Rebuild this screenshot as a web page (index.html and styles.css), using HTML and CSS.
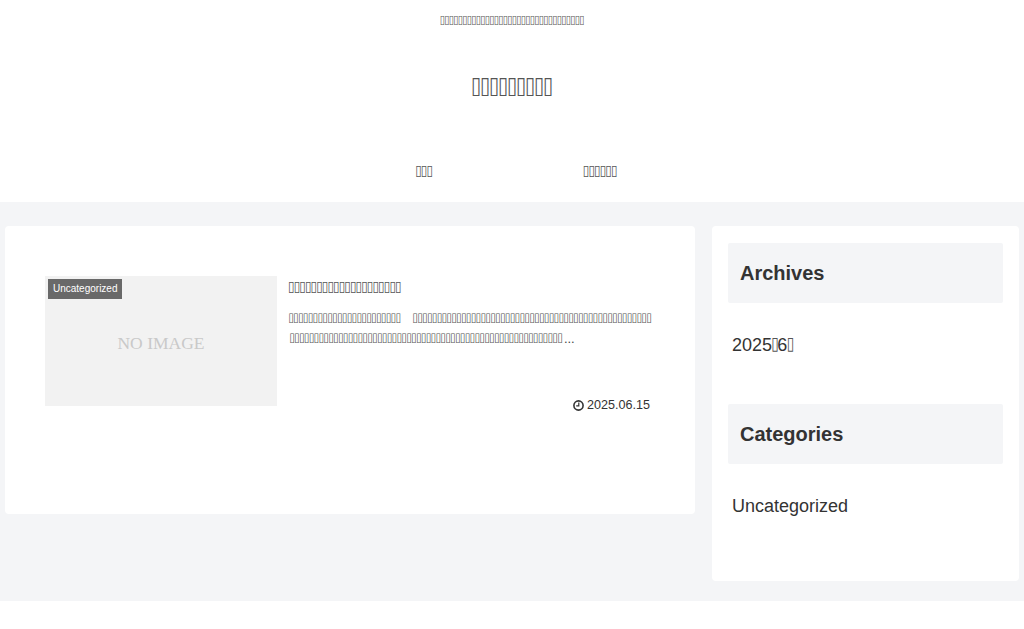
FILE: index.html
```html
<!DOCTYPE html>
<html lang="ja">
<head>
<meta charset="utf-8">
<title>Blog</title>
<link rel="stylesheet" href="styles.css">
</head>
<body>
<header class="site-header">
  <p class="tagline"><span class="t">⌷⌷⌷⌷⌷⌷⌷⌷⌷⌷⌷⌷⌷⌷⌷⌷⌷⌷⌷⌷⌷⌷⌷⌷⌷⌷⌷⌷⌷⌷⌷⌷</span></p>
  <h1 class="site-title"><span class="t">⌷⌷⌷⌷⌷⌷⌷⌷⌷</span></h1>
  <nav class="nav">
    <a class="nav-item"><span class="t">⌷⌷⌷</span></a>
    <a class="nav-item"><span class="t">⌷⌷⌷⌷⌷⌷</span></a>
  </nav>
</header>
<main class="content">
  <section class="card">
    <article class="post">
      <div class="thumb">
        <span class="label">Uncategorized</span>
        <span class="noimage">NO IMAGE</span>
      </div>
      <div class="post-body">
        <h2 class="post-title"><span class="t">⌷⌷⌷⌷⌷⌷⌷⌷⌷⌷⌷⌷⌷⌷⌷⌷⌷⌷⌷⌷</span></h2>
        <p class="excerpt"><span class="t">⌷⌷⌷⌷⌷⌷⌷⌷⌷⌷⌷⌷⌷⌷⌷⌷⌷⌷⌷⌷⌷⌷⌷</span>&#x3000;<span class="t">⌷⌷⌷⌷⌷⌷⌷⌷⌷⌷⌷⌷⌷⌷⌷⌷⌷⌷⌷⌷⌷⌷⌷⌷⌷⌷⌷⌷⌷⌷⌷⌷⌷⌷⌷⌷⌷⌷⌷⌷⌷⌷⌷⌷⌷⌷⌷⌷⌷⌷⌷⌷⌷⌷⌷⌷⌷⌷⌷⌷⌷⌷⌷⌷⌷⌷⌷⌷⌷⌷⌷⌷⌷⌷⌷⌷⌷⌷⌷⌷⌷⌷⌷⌷⌷⌷⌷⌷⌷⌷⌷⌷⌷⌷⌷⌷⌷⌷⌷⌷⌷⌷⌷⌷⌷</span><span class="more">...</span></p>
        <p class="date">
          <svg class="clock" viewBox="0 0 11 11" aria-hidden="true"><circle cx="5.5" cy="5.5" r="4.6" fill="none" stroke="currentColor" stroke-width="1.6"/><path d="M5.8 2.6v3.2H3.2" fill="none" stroke="currentColor" stroke-width="1.2"/></svg>
          2025.06.15
        </p>
      </div>
    </article>
  </section>
  <aside class="sidebar">
    <h3 class="widget-title">Archives</h3>
    <a class="widget-link">2025<span class="t">⌷</span>6<span class="t">⌷</span></a>
    <h3 class="widget-title">Categories</h3>
    <a class="widget-link">Uncategorized</a>
  </aside>
</main>
</body>
</html>
```
FILE: styles.css
```css
* { box-sizing: border-box; }
html, body { margin: 0; padding: 0; background: #fff; }
body {
  font-family: "Liberation Sans", Arial, sans-serif;
  color: #333;
  height: 629px;
  overflow: hidden;
}
.t {
  font-family: "DejaVu Sans Mono", monospace;
  font-size: 0.8em;
  letter-spacing: -0.133em;
  line-height: 1;
  margin-left: -0.1em;
  vertical-align: 1px;
  color: #555;
}
.site-header {
  height: 202px;
  display: flex;
  flex-direction: column;
  align-items: center;
  padding-top: 14px;
}
.tagline { margin: 0; font-size: 12px; line-height: 14px; }
.site-title {
  margin: 42px 0 0;
  font-size: 24px;
  line-height: 34px;
  font-weight: 400;
}
.nav {
  display: flex;
  margin-top: 58px;
}
.nav-item {
  width: 176px;
  text-align: center;
  font-size: 15px;
  line-height: 20px;
}
.content {
  display: flex;
  align-items: flex-start;
  gap: 17px;
  height: 399px;
  padding: 24px 5px 0;
  background: #f4f5f7;
}
.card {
  width: 690px;
  height: 288px;
  padding: 50px 40px 0;
  background: #fff;
  border-radius: 4px;
}
.post { display: flex; gap: 12px; }
.thumb {
  position: relative;
  flex: none;
  width: 232px;
  height: 130px;
  display: flex;
  align-items: center;
  justify-content: center;
  background: #f2f2f2;
}
.label {
  position: absolute;
  top: 3px;
  left: 3px;
  padding: 0 5px;
  font-size: 10px;
  line-height: 20px;
  color: #fff;
  background: #696969;
}
.noimage {
  font-family: "Liberation Serif", serif;
  font-size: 17.5px;
  color: #c9c9c9;
  margin-top: 4px;
}
.post-body { flex: 1; min-width: 0; display: flex; flex-direction: column; }
.post-title {
  margin: 2px 0 0;
  font-size: 15px;
  line-height: 20px;
  font-weight: 400;
}
.excerpt {
  margin: 11px 0 0;
  font-size: 13px;
  line-height: 20px;
  color: #444;
  word-break: break-all;
}
.more { margin-left: 2px; }
.date {
  margin: 47px 5px 0 0;
  display: flex;
  justify-content: flex-end;
  align-items: center;
  gap: 3px;
  font-size: 12.6px;
  line-height: 18px;
}
.clock { width: 11px; height: 11px; }
.sidebar {
  width: 307px;
  height: 355px;
  padding: 17px 16px 0;
  background: #fff;
  border-radius: 4px;
  display: flex;
  flex-direction: column;
}
.widget-title {
  margin: 0;
  height: 60px;
  padding: 0 12px;
  display: flex;
  align-items: center;
  background: #f4f5f7;
  font-size: 20px;
  font-weight: 700;
  border-radius: 2px;
}
.widget-link {
  margin: 32px 0 48px 4px;
  font-size: 18px;
  line-height: 21px;
}
```
